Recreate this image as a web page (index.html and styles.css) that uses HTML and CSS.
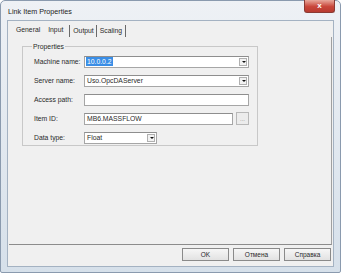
FILE: index.html
```html
<!DOCTYPE html>
<html>
<head>
<meta charset="utf-8">
<link rel="stylesheet" href="styles.css">
</head>
<body>
<div class="window">
  <div class="titlebar">
    <span class="title">Link Item Properties</span>
    <span class="close">x</span>
  </div>
  <div class="client">
    <div class="tabs">
      <span class="tab">General</span>
      <span class="tab active">Input</span>
      <span class="tab sep">Output</span>
      <span class="tab sep">Scaling</span>
      <span class="tab-end"></span>
    </div>
    <div class="panel">
      <fieldset class="group">
        <legend>Properties</legend>
        <div class="row">
          <label>Machine name:</label>
          <div class="combo wide"><span class="sel">10.0.0.2</span><span class="arrow"></span></div>
        </div>
        <div class="row">
          <label>Server name:</label>
          <div class="combo wide"><span class="val">Uso.OpcDAServer</span><span class="arrow"></span></div>
        </div>
        <div class="row">
          <label>Access path:</label>
          <div class="edit wide"></div>
        </div>
        <div class="row">
          <label>Item ID:</label>
          <div class="edit item"><span class="val">MB6.MASSFLOW</span></div>
          <span class="dots">...</span>
        </div>
        <div class="row">
          <label>Data type:</label>
          <div class="combo short"><span class="val">Float</span><span class="arrow"></span></div>
        </div>
      </fieldset>
    </div>
    <div class="buttons">
      <span class="btn">OK</span>
      <span class="btn">Отмена</span>
      <span class="btn">Справка</span>
    </div>
  </div>
</div>
</body>
</html>
```
FILE: styles.css
```css
html, body {
  margin: 0;
  padding: 0;
  background: #ffffff;
}
body {
  font-family: "Liberation Sans", Arial, sans-serif;
  font-size: 6.8px;
  color: #2a2a2a;
}
.window {
  width: 341px;
  height: 273px;
  box-sizing: border-box;
  background: linear-gradient(#eef1f5, #d6e0ea);
  border: 1px solid #8a9aae;
  border-radius: 5px 5px 2px 2px;
  display: flex;
  flex-direction: column;
}
.titlebar {
  height: 19px;
  display: flex;
  justify-content: space-between;
  align-items: flex-start;
  padding: 0 5px 0 7px;
}
.title {
  margin-top: 6px;
  font-size: 7.2px;
  color: #222;
}
.close {
  width: 29px;
  height: 12px;
  margin-top: -1px;
  background: linear-gradient(#e8a99c, #c9463a 55%, #b83b30);
  border: 1px solid #8a3a33;
  border-top: none;
  border-radius: 0 0 3px 3px;
  color: #fff;
  font-weight: bold;
  font-size: 8px;
  text-align: center;
  line-height: 11px;
}
.client {
  flex: 1;
  margin: 0 6px 5px 6px;
  background: #f0f0f0;
  border: 1px solid #a4b2c2;
  display: flex;
  flex-direction: column;
}
.tabs {
  height: 16px;
  display: flex;
  align-items: stretch;
  padding-left: 8px;
  white-space: nowrap;
}
.tab {
  line-height: 18px;
}
.tab.active {
  margin-left: 8px;
  margin-right: 6px;
}
.tab.sep {
  border-left: 1px solid #6a6a6a;
  margin-top: 4px;
  line-height: 12px;
  padding: 0 2px 0 3px;
}
.tab-end {
  border-left: 1px solid #6a6a6a;
  margin-top: 4px;
  margin-left: 1px;
}
.panel {
  height: 208px;
  margin: 0 1px 0 1px;
  border-right: 1px solid #a0a0a0;
  border-bottom: 1px solid #8c8c8c;
  box-sizing: border-box;
  padding: 6px 0 0 13px;
}
.group {
  width: 236px;
  height: 103px;
  box-sizing: border-box;
  margin: 0;
  border: 1px solid #c8c8c8;
  padding: 2px 0 0 11px;
}
.group legend {
  padding: 0 1px;
  margin-left: -2px;
}
.row {
  height: 19px;
  display: flex;
  align-items: center;
}
.row label {
  width: 50px;
  white-space: nowrap;
}
.combo, .edit {
  height: 12px;
  box-sizing: border-box;
  background: #fff;
  border: 1px solid #a6a6a6;
  border-top-color: #8e8e8e;
  display: flex;
  align-items: center;
  justify-content: space-between;
  padding-left: 1px;
}
.wide { width: 165px; }
.item { width: 149px; }
.short { width: 73px; }
.sel {
  background: #3a8ee6;
  color: #fff;
  padding: 0 1px;
  line-height: 9px;
}
.val { padding-left: 1px; }
.arrow {
  width: 8px;
  height: 8px;
  margin-right: 1px;
  box-sizing: border-box;
  border: 1px solid #b0b0b0;
  background: #f2f2f2;
  position: relative;
}
.arrow::after {
  content: "";
  position: absolute;
  left: 1.5px;
  top: 2px;
  border-left: 2px solid transparent;
  border-right: 2px solid transparent;
  border-top: 2px solid #111;
}
.dots {
  margin-left: 3px;
  width: 13px;
  height: 13px;
  box-sizing: border-box;
  border: 1px solid #b8b8b8;
  background: #ececec;
  color: #888;
  font-size: 6px;
  text-align: center;
  line-height: 12px;
}
.buttons {
  display: flex;
  justify-content: flex-end;
  gap: 4px;
  padding: 3px 2px 0 0;
}
.btn {
  width: 47px;
  height: 13px;
  box-sizing: border-box;
  border: 1px solid #8a8a8a;
  background: linear-gradient(#f6f6f6, #e2e2e2);
  text-align: center;
  line-height: 11px;
  font-size: 6.5px;
}
```
